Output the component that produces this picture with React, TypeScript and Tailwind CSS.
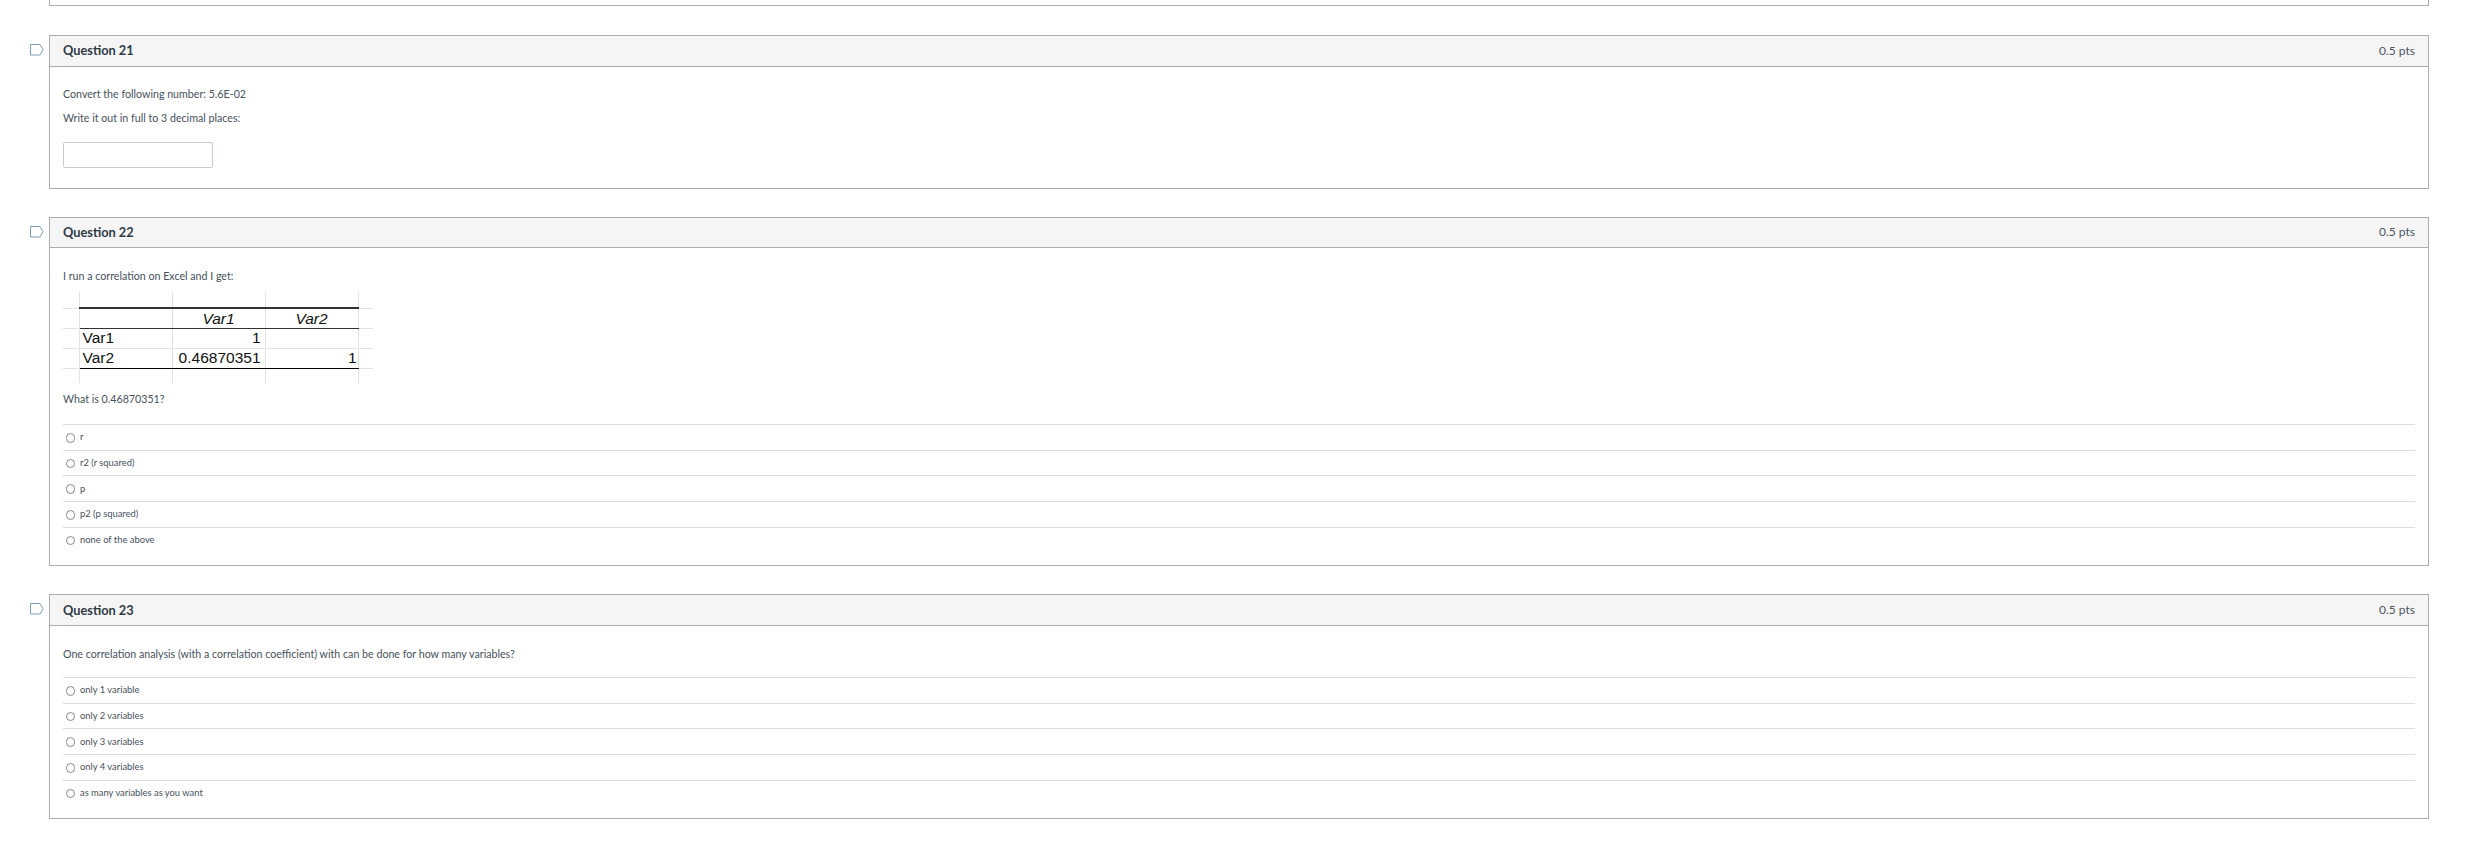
function Flag() {
  return (
    <svg width="14" height="12" viewBox="0 0 14 12" className="block">
      <path d="M0.5 0.5H10L13 5.7L10 11H0.5Z" fill="white" stroke="#7f9fb5" strokeWidth="1" />
    </svg>
  );
}

function QuestionCard({
  title,
  children,
}: {
  title: string;
  children: React.ReactNode;
}) {
  return (
    <div className="flex mb-[28px]">
      <div className="w-[49px] shrink-0 pl-[30px] pt-[9px]">
        <Flag />
      </div>
      <div className="flex-1 border border-[#aaaeb0]">
        <div className="h-[30.5px] bg-[#f5f5f5] border-b border-[#aaaeb0] flex items-center justify-between px-[13px]">
          <span className="font-bold text-[12.8px] text-[#2d3b45]">{title}</span>
          <span className="text-[12px] text-[#4a5560]">0.5 pts</span>
        </div>
        {children}
      </div>
    </div>
  );
}

function Answers({ items }: { items: string[] }) {
  return (
    <div className="mx-[13px] mb-[13px]">
      {items.map((item) => (
        <div
          key={item}
          className="h-[25.7px] border-t border-[#dcdee0] flex items-center pl-[2.5px]"
        >
          <span className="w-[9.5px] h-[9.5px] rounded-full border border-[#888] bg-white mr-[5px] mt-[1px]" />
          <span className="text-[9.4px] text-[#46525c]">{item}</span>
        </div>
      ))}
    </div>
  );
}

function ExcelPicture() {
  const line = "border-[#e2e2e2]";
  return (
    <table className="border-collapse font-['Liberation_Sans',sans-serif] text-[15.5px] text-[#111] leading-none">
      <tbody>
        <tr className="h-[16px]">
          <td className={`w-[16px] border-r ${line}`} />
          <td className={`w-[93px] border-r ${line}`} />
          <td className={`w-[93px] border-r ${line}`} />
          <td className={`w-[93px] border-r ${line}`} />
          <td className="w-[15px]" />
        </tr>
        <tr className="h-[20px]">
          <td className={`border-y border-r ${line}`} />
          <td className={`border-r ${line} border-t-2 border-t-[#333] border-b border-b-[#333]`} />
          <td className={`border-r ${line} border-t-2 border-t-[#333] border-b border-b-[#333] text-center italic`}>Var1</td>
          <td className={`border-r ${line} border-t-2 border-t-[#333] border-b border-b-[#333] text-center italic`}>Var2</td>
          <td className={`border-y ${line}`} />
        </tr>
        <tr className="h-[20px]">
          <td className={`border-y border-r ${line}`} />
          <td className={`border-y border-r ${line} pl-[3px]`}>Var1</td>
          <td className={`border-y border-r ${line} text-right pr-[4px]`}>1</td>
          <td className={`border-y border-r ${line}`} />
          <td className={`border-y ${line}`} />
        </tr>
        <tr className="h-[20px]">
          <td className={`border-y border-r ${line}`} />
          <td className={`border-r ${line} border-t border-t-[#e2e2e2] border-b border-b-black pl-[3px]`}>Var2</td>
          <td className={`border-r ${line} border-t border-t-[#e2e2e2] border-b border-b-black text-right pr-[4px]`}>0.46870351</td>
          <td className={`border-r ${line} border-t border-t-[#e2e2e2] border-b border-b-black text-right pr-[1px]`}>1</td>
          <td className={`border-y ${line}`} />
        </tr>
        <tr className="h-[15px]">
          <td className={`border-r ${line}`} />
          <td className={`border-r ${line}`} />
          <td className={`border-r ${line}`} />
          <td className={`border-r ${line}`} />
          <td />
        </tr>
      </tbody>
    </table>
  );
}

export default function App() {
  return (
    <div className="min-h-[842px] bg-white font-['Lato','Noto_Sans',sans-serif] pr-[37px]">
      <div className="ml-[49px] h-[6px] border-x border-b border-[#aaaeb0] mb-[29px]" />

      <QuestionCard title="Question 21">
        <div className="px-[13px] pt-[18px] pb-[20px] text-[10.66px] leading-[18px] text-[#46525c]">
          <p className="mb-[6px]">Convert the following number: 5.6E-02</p>
          <p className="mb-[15px]">Write it out in full to 3 decimal places:</p>
          <input className="block w-[150px] h-[26px] bg-white border border-[#c7cdd1] rounded-[2px]" />
        </div>
      </QuestionCard>

      <QuestionCard title="Question 22">
        <div className="px-[13px] pt-[19px] text-[10.66px] leading-[18px] text-[#46525c]">
          <p className="mb-[7px]">I run a correlation on Excel and I get:</p>
          <ExcelPicture />
          <p className="mt-[7px] mb-[16px]">What is 0.46870351?</p>
        </div>
        <Answers items={["r", "r2 (r squared)", "p", "p2 (p squared)", "none of the above"]} />
      </QuestionCard>

      <QuestionCard title="Question 23">
        <div className="px-[13px] pt-[19px] pb-[14px] text-[10.66px] leading-[18px] text-[#46525c]">
          <p>One correlation analysis (with a correlation coefficient) with can be done for how many variables?</p>
        </div>
        <Answers
          items={[
            "only 1 variable",
            "only 2 variables",
            "only 3 variables",
            "only 4 variables",
            "as many variables as you want",
          ]}
        />
      </QuestionCard>
    </div>
  );
}
